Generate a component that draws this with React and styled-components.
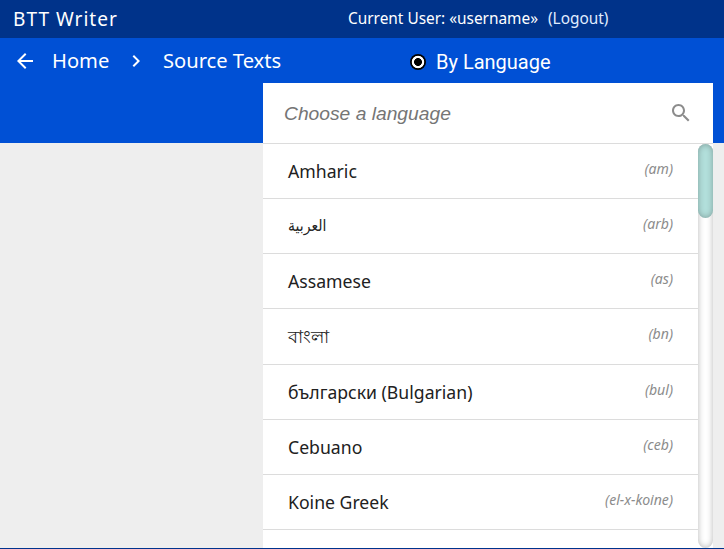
import React from "react";
import styled, { createGlobalStyle } from "styled-components";

const GlobalStyle = createGlobalStyle`
  *, *::before, *::after { box-sizing: border-box; }
  body { margin: 0; overflow: hidden; background: #eeeeee; }
`;

const Page = styled.div`
  display: flex;
  flex-direction: column;
  width: 724px;
  height: 549px;
  overflow: hidden;
  background: linear-gradient(#0050d5, #0050d5) 0 38px / 100% 105px no-repeat #eeeeee;
  border-bottom: 1px solid #00338d;
  font-family: "Noto Sans", sans-serif;
  color: #fff;
`;

const TitleBar = styled.header`
  display: flex;
  align-items: center;
  flex: none;
  height: 38px;
  padding-left: 13px;
  background: #00338a;
  white-space: nowrap;
`;

const AppName = styled.div`
  width: 335px;
  font-size: 19.1px;
  line-height: 38px;
  letter-spacing: 1px;
`;

const UserInfo = styled.div`
  display: flex;
  gap: 10px;
  font-size: 15.4px;
  line-height: 38px;
  height: 38px;
`;

const Logout = styled.a`
  color: #e1edff;
`;

const NavBar = styled.nav`
  display: flex;
  align-items: center;
  flex: none;
  height: 45px;
  padding-left: 15px;
  font-size: 20.15px;
  white-space: nowrap;
`;

const NavIcon = styled.svg`
  flex: none;
  display: block;
  width: ${(p) => p.$size}px;
  height: ${(p) => p.$size}px;
  fill: #fff;
`;

const Crumb = styled.span`
  width: ${(p) => p.$width}px;
  margin-left: ${(p) => p.$left}px;
  line-height: 45px;
`;

const Option = styled.label`
  display: flex;
  align-items: center;
  gap: 10px;
  margin-left: 128px;
  padding-top: 2px;
  font-family: Roboto, sans-serif;
  font-size: 20px;
  line-height: 43px;
`;

const OptionText = styled.span`
  padding-top: 2px;
`;

const RadioMark = styled.span`
  width: 16px;
  height: 16px;
  border-radius: 50%;
  background: radial-gradient(circle, #000 3.6px, #fff 4.3px, #fff 5.9px, #000 6.6px);
`;

const Panel = styled.main`
  display: flex;
  flex-direction: column;
  flex: 1;
  min-height: 0;
  width: 450px;
  margin-left: 263px;
  background: #fff;
`;

const SearchBox = styled.div`
  display: flex;
  align-items: center;
  flex: none;
  height: 61px;
  padding: 0 20px 1px 21px;
  border-bottom: 1px solid #dcdcdc;
`;

const SearchInput = styled.input`
  flex: 1;
  min-width: 0;
  height: 40px;
  padding: 2px 0 0;
  border: 0;
  outline: 0;
  background: transparent;
  font: italic 19.24px "Liberation Sans", sans-serif;
  &::placeholder { color: #757575; opacity: 1; }
`;

const SearchIcon = styled.svg`
  width: 24px;
  height: 24px;
  fill: #8c8c8c;
`;

const ListArea = styled.div`
  display: flex;
  flex: 1;
  min-height: 0;
`;

const List = styled.ul`
  flex: 1;
  margin: 0;
  padding: 0;
  overflow: hidden;
  list-style: none;
`;

const Row = styled.li`
  display: flex;
  justify-content: space-between;
  height: 55.15px;
  padding: 0 25px;
  border-bottom: 1px solid #dcdcdc;
`;

const Name = styled.span`
  color: #212121;
  font-size: 17.65px;
  line-height: 54px;

  &:lang(ar) {
    font-family: "DejaVu Sans Condensed", "DejaVu Sans", sans-serif;
    font-stretch: condensed;
    font-size: 15.6px;
    line-height: 54px;
  }
`;

const Code = styled.span`
  color: #8c8c8c;
  font-size: 14.08px;
  font-style: italic;
  line-height: 50px;
`;

const Track = styled.div`
  width: 15px;
  height: 404px;
  border-radius: 8px;
  background: #fff;
  box-shadow: inset 0 0 6px rgba(0, 0, 0, 0.3);
`;

const Thumb = styled.div`
  height: 74px;
  border-radius: 8px;
  background: #b2dfdb;
  box-shadow: inset 0 0 6px rgba(0, 0, 0, 0.3);
`;

const languages = [
  ["Amharic", "am"],
  ["العربية", "arb", "ar"],
  ["Assamese", "as"],
  ["বাংলা", "bn", "bn"],
  ["български (Bulgarian)", "bul"],
  ["Cebuano", "ceb"],
  ["Koine Greek", "el-x-koine"],
];

export default function App() {
  return (
    <>
      <GlobalStyle />
      <Page>
        <TitleBar>
          <AppName>BTT Writer</AppName>
          <UserInfo>
            <span>Current User: «username»</span>
            <Logout>(Logout)</Logout>
          </UserInfo>
        </TitleBar>
        <NavBar>
          <NavIcon $size={20} viewBox="2 2 20 20">
            <path d="M20 11H7.83l5.59-5.59L12 4l-8 8 8 8 1.41-1.41L7.83 13H20v-2z" />
          </NavIcon>
          <Crumb $left={17} $width={72}>Home</Crumb>
          <NavIcon $size={24} viewBox="0 0 24 24">
            <path d="M10 6L8.59 7.41 13.17 12l-4.58 4.59L10 18l6-6z" />
          </NavIcon>
          <Crumb $left={15} $width={119}>Source Texts</Crumb>
          <Option>
            <RadioMark />
            <OptionText>By Language</OptionText>
          </Option>
        </NavBar>
        <Panel>
          <SearchBox>
            <SearchInput placeholder="Choose a language" />
            <SearchIcon viewBox="0 0 24 24">
              <path d="M15.5 14h-.79l-.28-.27C15.41 12.59 16 11.11 16 9.5 16 5.91 13.09 3 9.5 3S3 5.91 3 9.5 5.91 16 9.5 16c1.61 0 3.09-.59 4.23-1.57l.27.28v.79l5 4.99L20.49 19l-4.99-5zm-6 0C7.01 14 5 11.99 5 9.5S7.01 5 9.5 5 14 7.01 14 9.5 11.99 14 9.5 14z" />
            </SearchIcon>
          </SearchBox>
          <ListArea>
            <List>
              {languages.map(([name, code, lang]) => (
                <Row key={code}>
                  <Name lang={lang}>{name}</Name>
                  <Code>({code})</Code>
                </Row>
              ))}
            </List>
            <Track>
              <Thumb />
            </Track>
          </ListArea>
        </Panel>
      </Page>
    </>
  );
}
